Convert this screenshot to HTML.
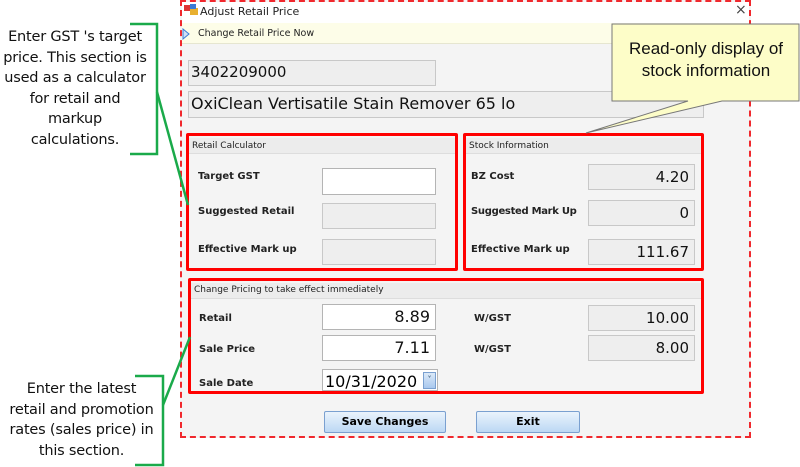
<!DOCTYPE html>
<html><head><style>
*{margin:0;padding:0;box-sizing:border-box}
body{width:800px;height:467px;background:#fff;position:relative;overflow:hidden;font-family:"DejaVu Sans","Liberation Sans",sans-serif}
.a{position:absolute}
.win{left:180px;top:0;width:571px;height:438px;background:#f4f4f4;border:2px dashed #f0282d}
.tb{left:182px;top:2px;width:567px;height:21px;background:#fff}
.hb{left:182px;top:23px;width:567px;height:21px;background:#fdfde8;border-bottom:1px solid #e6e6d0}
.s{font-size:9.5px;color:#222}
.b{font-size:10px;font-weight:bold;color:#222}
.box{background:#eeeeee;border:1px solid #c8c8c8}
.in{background:#fff;border:1px solid #b4b4b4}
.num{font-size:15px;color:#111;text-align:right;padding-right:5px;line-height:24px}
.red{border:3px solid #f00;border-radius:2px}
.gh{background:#ececec;border-bottom:1px solid #ddd}
.lt{font-size:14.5px;color:#111;text-align:center;line-height:20.6px;white-space:nowrap;letter-spacing:-0.2px}
.btn{border:1px solid #7aa0d0;background:linear-gradient(#eaf3fc,#bcd8f4);font-size:11px;font-weight:bold;text-align:center;line-height:20px;border-radius:2px}
</style></head><body>
<div class="a win"></div>
<div class="a tb"></div>
<div class="a" style="left:184px;top:5px;width:7px;height:6px;background:#d33"></div>
<div class="a" style="left:190px;top:8px;width:8px;height:7px;background:#e8b030"></div>
<div class="a" style="left:190px;top:4px;width:6px;height:5px;background:#3a7bd5"></div>
<div class="a s" style="left:200px;top:5px;font-size:11px">Adjust Retail Price</div>
<div class="a" style="left:735px;top:2px;font-size:14px;color:#444">×</div>
<div class="a hb"></div>
<svg class="a" style="left:182px;top:28px" width="8" height="12"><path d="M1 1 L7 6 L1 11 Z" fill="#cfe0f5" stroke="#3a7bd5"/></svg>
<div class="a s" style="left:198px;top:28px;font-size:9.5px">Change Retail Price Now</div>
<div class="a box" style="left:188px;top:60px;width:248px;height:26px"></div>
<div class="a" style="left:191px;top:63px;font-size:15px;color:#111">3402209000</div>
<div class="a box" style="left:188px;top:91px;width:516px;height:27px"></div>
<div class="a" style="left:191px;top:94px;font-size:16px;color:#111">OxiClean Vertisatile Stain Remover 65 lo</div>

<div class="a red" style="left:186px;top:133px;width:272px;height:138px"><div class="gh" style="height:16px;margin-top:2px"></div></div>
<div class="a s" style="left:192px;top:141px;font-size:9px">Retail Calculator</div>
<div class="a b" style="left:198px;top:171px">Target GST</div>
<div class="a b" style="left:198px;top:206px">Suggested Retail</div>
<div class="a b" style="left:198px;top:244px">Effective Mark up</div>
<div class="a in" style="left:322px;top:168px;width:114px;height:27px"></div>
<div class="a box" style="left:322px;top:203px;width:114px;height:26px"></div>
<div class="a box" style="left:322px;top:239px;width:114px;height:26px"></div>

<div class="a red" style="left:463px;top:133px;width:241px;height:138px"><div class="gh" style="height:16px;margin-top:2px"></div></div>
<div class="a s" style="left:469px;top:141px;font-size:9px">Stock Information</div>
<div class="a b" style="left:471px;top:171px">BZ Cost</div>
<div class="a b" style="left:471px;top:206px;letter-spacing:-0.3px">Suggested Mark Up</div>
<div class="a b" style="left:471px;top:244px">Effective Mark up</div>
<div class="a box num" style="left:588px;top:164px;width:107px;height:26px">4.20</div>
<div class="a box num" style="left:588px;top:200px;width:107px;height:26px">0</div>
<div class="a box num" style="left:588px;top:239px;width:107px;height:26px">111.67</div>

<div class="a red" style="left:188px;top:278px;width:516px;height:116px"><div class="gh" style="height:16px;margin-top:2px"></div></div>
<div class="a s" style="left:194px;top:285px;font-size:9px">Change Pricing to take effect immediately</div>
<div class="a b" style="left:199px;top:313px">Retail</div>
<div class="a b" style="left:199px;top:344px">Sale Price</div>
<div class="a b" style="left:199px;top:378px">Sale Date</div>
<div class="a in num" style="left:322px;top:304px;width:114px;height:26px;font-size:16px">8.89</div>
<div class="a in num" style="left:322px;top:335px;width:114px;height:26px;font-size:16px">7.11</div>
<div class="a in" style="left:322px;top:369px;width:116px;height:22px;font-size:16px;padding-left:2px;line-height:24px">10/31/2020</div>
<div class="a" style="left:423px;top:372px;width:13px;height:17px;background:linear-gradient(#dbe9f8,#a9c8ee);border:1px solid #7aa0d0;font-size:8px;color:#246;text-align:center;line-height:14px">˅</div>
<div class="a b" style="left:474px;top:313px">W/GST</div>
<div class="a b" style="left:474px;top:344px">W/GST</div>
<div class="a box num" style="left:588px;top:305px;width:107px;height:26px">10.00</div>
<div class="a box num" style="left:588px;top:335px;width:107px;height:26px">8.00</div>

<div class="a btn" style="left:324px;top:411px;width:122px;height:22px">Save Changes</div>
<div class="a btn" style="left:476px;top:411px;width:104px;height:22px">Exit</div>

<svg class="a" style="left:0;top:0" width="800" height="467">
<polyline points="130,24 157,24 157,154 130,154" fill="none" stroke="#1aaa4a" stroke-width="2.5"/>
<line x1="157" y1="92" x2="188" y2="205" stroke="#1aaa4a" stroke-width="2.5"/>
<polyline points="135,376 163,376 163,465 135,465" fill="none" stroke="#1aaa4a" stroke-width="2.5"/>
<line x1="163" y1="405" x2="190" y2="337" stroke="#1aaa4a" stroke-width="2.5"/>
<path d="M612 24 H799 V101 H722 L586 133 L688 101 H612 Z" fill="#fdfdc8" stroke="#777" stroke-width="1"/>
</svg>
<div class="a" style="left:612px;top:38px;width:188px;text-align:center;font-family:'Liberation Sans',sans-serif;font-size:17px;line-height:22px;color:#111">Read-only display of<br>stock information</div>
<div class="a lt" style="left:-5px;top:27px;width:160px">Enter GST 's target<br>price. This section is<br>used as a calculator<br>for retail and<br>markup<br>calculations.</div>
<div class="a lt" style="left:0px;top:379px;width:163px">Enter the latest<br>retail and promotion<br>rates (sales price) in<br>this section.</div>
</body></html>
